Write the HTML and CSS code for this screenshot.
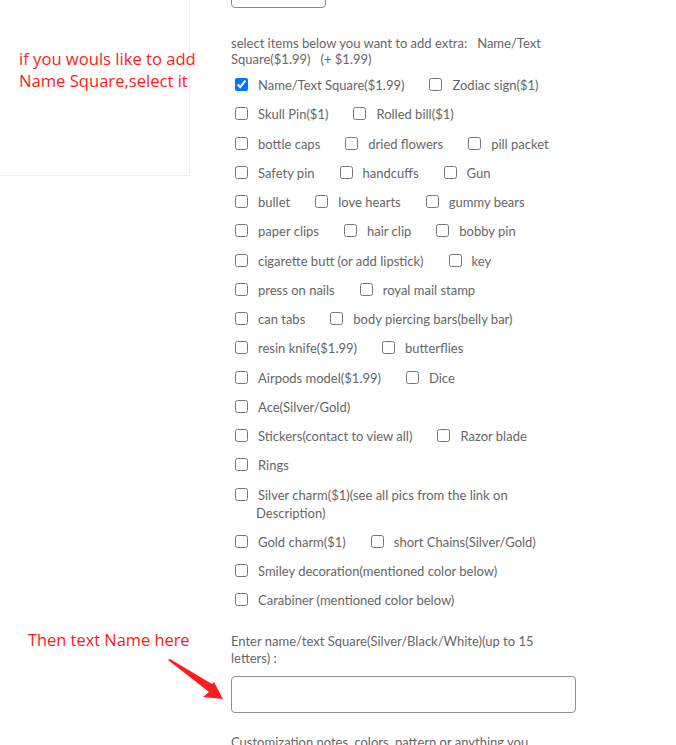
FILE: index.html
```html
<!DOCTYPE html>
<html>
<head>
<meta charset="utf-8">
<link rel="stylesheet" href="styles.css">
</head>
<body>
<div class="page">
  <aside class="side">
    <div class="note-box">
      <p class="red-note">if you wouls like to add<br>Name Square,select it</p>
    </div>
    <p class="red-note then">Then text Name here</p>
    <svg class="arrow" width="70" height="50" viewBox="0 0 70 50">
      <polygon points="0,1 2,0 44,25 46,23 55,40 35,38 41,33" fill="#fb1c1c"/>
    </svg>
  </aside>
  <main class="form">
    <div class="top-input"></div>
    <p class="label">select items below you want to add extra:&nbsp;&nbsp; Name/Text Square($1.99)&nbsp;&nbsp; (+ $1.99)</p>
    <div class="options">
      <label class="opt"><input type="checkbox" checked><span>Name/Text Square($1.99)</span></label>
      <label class="opt"><input type="checkbox"><span>Zodiac sign($1)</span></label>
      <label class="opt"><input type="checkbox"><span>Skull Pin($1)</span></label>
      <label class="opt"><input type="checkbox"><span>Rolled bill($1)</span></label>
      <label class="opt"><input type="checkbox"><span>bottle caps</span></label>
      <label class="opt"><input type="checkbox"><span>dried flowers</span></label>
      <label class="opt"><input type="checkbox"><span>pill packet</span></label>
      <label class="opt"><input type="checkbox"><span>Safety pin</span></label>
      <label class="opt"><input type="checkbox"><span>handcuffs</span></label>
      <label class="opt"><input type="checkbox"><span>Gun</span></label>
      <label class="opt"><input type="checkbox"><span>bullet</span></label>
      <label class="opt"><input type="checkbox"><span>love hearts</span></label>
      <label class="opt"><input type="checkbox"><span>gummy bears</span></label>
      <label class="opt"><input type="checkbox"><span>paper clips</span></label>
      <label class="opt"><input type="checkbox"><span>hair clip</span></label>
      <label class="opt"><input type="checkbox"><span>bobby pin</span></label>
      <label class="opt"><input type="checkbox"><span>cigarette butt (or add lipstick)</span></label>
      <label class="opt"><input type="checkbox"><span>key</span></label>
      <label class="opt"><input type="checkbox"><span>press on nails</span></label>
      <label class="opt"><input type="checkbox"><span>royal mail stamp</span></label>
      <label class="opt"><input type="checkbox"><span>can tabs</span></label>
      <label class="opt"><input type="checkbox"><span>body piercing bars(belly bar)</span></label>
      <label class="opt"><input type="checkbox"><span>resin knife($1.99)</span></label>
      <label class="opt"><input type="checkbox"><span>butterflies</span></label>
      <label class="opt"><input type="checkbox"><span>Airpods model($1.99)</span></label>
      <label class="opt"><input type="checkbox"><span>Dice</span></label>
      <label class="opt wide"><input type="checkbox"><span>Ace(Silver/Gold)</span></label>
      <label class="opt"><input type="checkbox"><span>Stickers(contact to view all)</span></label>
      <label class="opt"><input type="checkbox"><span>Razor blade</span></label>
      <label class="opt wide"><input type="checkbox"><span>Rings</span></label>
      <label class="opt wide"><input type="checkbox"><span>Silver charm($1)(see all pics from the link on Description)</span></label>
      <label class="opt"><input type="checkbox"><span>Gold charm($1)</span></label>
      <label class="opt"><input type="checkbox"><span>short Chains(Silver/Gold)</span></label>
      <label class="opt wide"><input type="checkbox"><span>Smiley decoration(mentioned color below)</span></label>
      <label class="opt wide"><input type="checkbox"><span>Carabiner (mentioned color below)</span></label>
    </div>
    <p class="label name-label">Enter name/text Square(Silver/Black/White)(up to 15 letters) :</p>
    <input class="text-input" type="text">
    <p class="label notes-label">Customization notes, colors, pattern or anything you</p>
  </main>
</div>
</body>
</html>
```
FILE: styles.css
```css
html, body {
  margin: 0;
  padding: 0;
  background: #fff;
  overflow: hidden;
}
.page {
  display: flex;
  width: 676px;
  height: 745px;
  font-family: "Lato", "Noto Sans", sans-serif;
}
.side {
  position: relative;
  width: 231px;
  flex-shrink: 0;
}
.note-box {
  width: 190px;
  height: 176px;
  border-right: 1px solid #eeeeee;
  border-bottom: 1px solid #eeeeee;
  box-sizing: border-box;
  padding-top: 48px;
  padding-left: 19px;
}
.red-note {
  margin: 0;
  color: #fb1c1c;
  font-family: "Open Sans", "Noto Sans", sans-serif;
  font-size: 16.6px;
  line-height: 22px;
  white-space: nowrap;
}
.then {
  margin: 453px 0 0 28px;
  font-size: 16.4px;
}
.arrow {
  position: absolute;
  left: 168px;
  top: 659px;
}
.form {
  width: 345px;
  font-size: 13px;
  color: #666666;
}
.top-input {
  width: 93px;
  height: 20px;
  margin-top: -14px;
  border: 1px solid #8a8a8a;
  border-radius: 4px;
}
.label {
  margin: 27px 0 0;
  line-height: 16px;
}
.options {
  display: flex;
  flex-wrap: wrap;
  margin-top: 9px;
}
.opt {
  display: flex;
  align-items: flex-start;
  margin-right: 21px;
  margin-bottom: 11.25px;
  line-height: 18px;
}
.opt.wide {
  flex-basis: 100%;
  margin-right: 0;
}
.opt input {
  width: 13px;
  height: 13px;
  margin: 2px 0 0 4px;
  flex-shrink: 0;
}
.opt span {
  margin-left: 8px;
  text-indent: 2px;
}
.name-label {
  margin-top: 12px;
  line-height: 17px;
  max-width: 338px;
}
.text-input {
  display: block;
  box-sizing: border-box;
  width: 345px;
  height: 37px;
  margin-top: 9px;
  border: 1px solid #8f8f8f;
  border-radius: 4px;
  outline: none;
}
.notes-label {
  margin-top: 21px;
}
```
